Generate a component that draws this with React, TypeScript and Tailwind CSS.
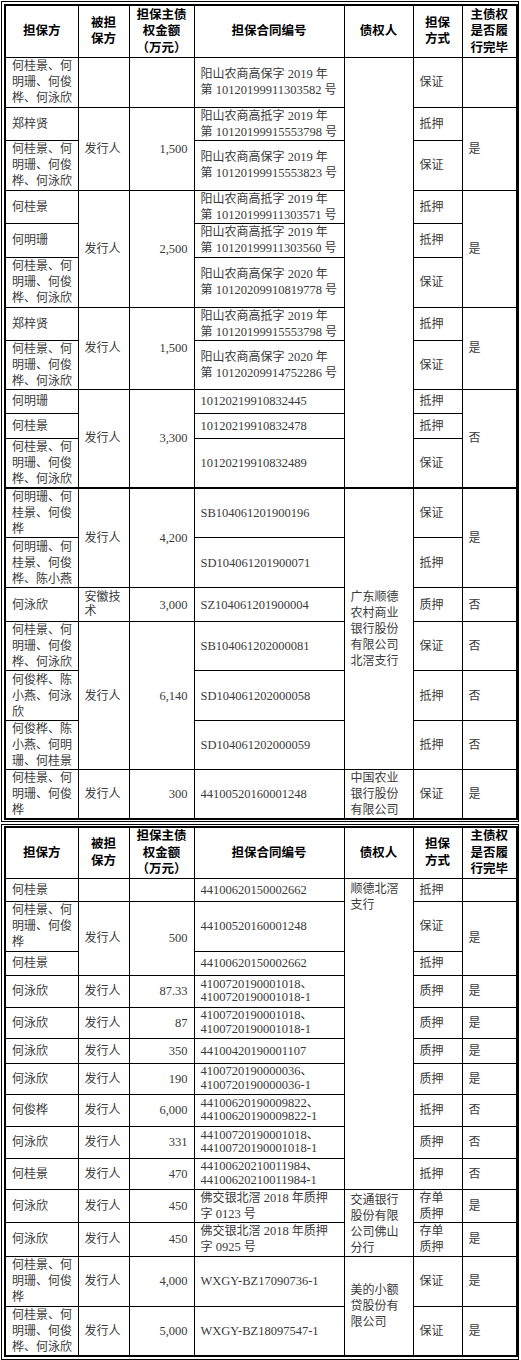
import clsx from 'clsx';

const CJK = /([\u3000-\u303f\u4e00-\u9fff\uff00-\uffef]+)/;

// CJK runs and Latin runs use slightly different sizes, as in the scanned PDF
function Txt({ s }: { s: string }) {
  const parts = s.split(CJK).filter(Boolean);
  return (
    <>
      {parts.map((p, i) =>
        CJK.test(p) ? (
          <span key={i} className="text-[12px] leading-none">
            {p}
          </span>
        ) : (
          <span key={i} className="text-[12.5px] leading-none">
            {p}
          </span>
        )
      )}
    </>
  );
}

type CellProps = {
  t?: string | string[];
  rs?: number;
  right?: boolean;
  top?: boolean;
  thick?: boolean;
  tight?: boolean;
};

function Td({ t, rs, right, top, thick, tight }: CellProps) {
  const lines = t === undefined ? [] : Array.isArray(t) ? t : [t];
  return (
    <td
      rowSpan={rs}
      className={clsx(
        'border border-black px-[6px] py-0 text-[12px] whitespace-nowrap text-[#3a3a3a]',
        right ? 'text-right' : 'text-left',
        top ? 'align-top pt-[2px]' : 'align-middle',
        thick && 'border-t-2'
      )}
    >
      {lines.map((l, i) => (
        <div key={i} className={tight ? 'h-[13.5px] leading-[13.5px]' : 'h-[16px] leading-[16px]'}>
          <Txt s={l} />
        </div>
      ))}
    </td>
  );
}

function Head({ short }: { short?: boolean }) {
  const h = 'border border-black font-bold text-black text-center align-middle leading-[16.5px] text-[12.5px] px-0';
  return (
    <tr className={short ? 'h-[50px]' : 'h-[52px]'}>
      <th className={h}>担保方</th>
      <th className={h}>
        被担
        <br />
        保方
      </th>
      <th className={h}>
        担保主债
        <br />
        权金额
        <br />
        （万元）
      </th>
      <th className={h}>担保合同编号</th>
      <th className={h}>债权人</th>
      <th className={h}>
        担保
        <br />
        方式
      </th>
      <th className={h}>
        主债权
        <br />
        是否履
        <br />
        行完毕
      </th>
    </tr>
  );
}

function Cols() {
  return (
    <colgroup>
      <col className="w-[73px]" />
      <col className="w-[51px]" />
      <col className="w-[65px]" />
      <col className="w-[150px]" />
      <col className="w-[69px]" />
      <col className="w-[49px]" />
      <col className="w-[55px]" />
    </colgroup>
  );
}

const four = ['何桂景、何', '明珊、何俊', '桦、何泳欣'];
const three = ['何桂景、何', '明珊、何俊', '桦'];

function TableOne() {
  return (
    <div className="w-[518px] border border-black px-[2px] pt-[2px] pb-[1px]">
      <table className="w-full table-fixed border-collapse border-2 border-black">
        <Cols />
        <tbody>
          <Head />
          <tr className="h-[50px]">
            <Td t={four} />
            <Td />
            <Td />
            <Td t={['阳山农商高保字 2019 年', '第 10120199911303582 号']} />
            <Td rs={11} />
            <Td t="保证" />
            <Td />
          </tr>
          <tr className="h-[33px]">
            <Td t="郑梓贤" />
            <Td t="发行人" rs={2} />
            <Td t="1,500" rs={2} right />
            <Td t={['阳山农商高抵字 2019 年', '第 10120199915553798 号']} />
            <Td t="抵押" />
            <Td t="是" rs={2} />
          </tr>
          <tr className="h-[50px]">
            <Td t={four} />
            <Td t={['阳山农商高保字 2019 年', '第 10120199915553823 号']} />
            <Td t="保证" />
          </tr>
          <tr className="h-[33px]">
            <Td t="何桂景" />
            <Td t="发行人" rs={3} />
            <Td t="2,500" rs={3} right />
            <Td t={['阳山农商高抵字 2019 年', '第 10120199911303571 号']} />
            <Td t="抵押" />
            <Td t="是" rs={3} />
          </tr>
          <tr className="h-[34px]">
            <Td t="何明珊" />
            <Td t={['阳山农商高抵字 2019 年', '第 10120199911303560 号']} />
            <Td t="抵押" />
          </tr>
          <tr className="h-[50px]">
            <Td t={four} />
            <Td t={['阳山农商高保字 2020 年', '第 10120209910819778 号']} />
            <Td t="保证" />
          </tr>
          <tr className="h-[33px]">
            <Td t="郑梓贤" />
            <Td t="发行人" rs={2} />
            <Td t="1,500" rs={2} right />
            <Td t={['阳山农商高抵字 2019 年', '第 10120199915553798 号']} />
            <Td t="抵押" />
            <Td t="是" rs={2} />
          </tr>
          <tr className="h-[49px]">
            <Td t={four} />
            <Td t={['阳山农商高保字 2020 年', '第 10120209914752286 号']} />
            <Td t="保证" />
          </tr>
          <tr className="h-[24px]">
            <Td t="何明珊" />
            <Td t="发行人" rs={3} />
            <Td t="3,300" rs={3} right />
            <Td t="10120219910832445" />
            <Td t="抵押" />
            <Td t="否" rs={3} />
          </tr>
          <tr className="h-[25px]">
            <Td t="何桂景" />
            <Td t="10120219910832478" />
            <Td t="抵押" />
          </tr>
          <tr className="h-[49px]">
            <Td t={four} />
            <Td t="10120219910832489" />
            <Td t="保证" />
          </tr>
          <tr className="h-[50px]">
            <Td t={['何明珊、何', '桂景、何俊', '桦']} thick />
            <Td t="发行人" rs={2} thick />
            <Td t="4,200" rs={2} right thick />
            <Td t="SB104061201900196" thick />
            <Td t={['广东顺德', '农村商业', '银行股份', '有限公司', '北滘支行']} rs={6} thick />
            <Td t="保证" thick />
            <Td t="是" rs={2} thick />
          </tr>
          <tr className="h-[50px]">
            <Td t={['何明珊、何', '桂景、何俊', '桦、陈小燕']} />
            <Td t="SD104061201900071" />
            <Td t="抵押" />
          </tr>
          <tr className="h-[34px]">
            <Td t="何泳欣" />
            <Td t={['安徽技', '术']} tight />
            <Td t="3,000" right />
            <Td t="SZ104061201900004" />
            <Td t="质押" />
            <Td t="否" />
          </tr>
          <tr className="h-[49px]">
            <Td t={four} />
            <Td t="发行人" rs={3} />
            <Td t="6,140" rs={3} right />
            <Td t="SB104061202000081" />
            <Td t="保证" />
            <Td t="否" />
          </tr>
          <tr className="h-[50px]">
            <Td t={['何俊桦、陈', '小燕、何泳', '欣']} />
            <Td t="SD104061202000058" />
            <Td t="抵押" />
            <Td t="否" />
          </tr>
          <tr className="h-[49px]">
            <Td t={['何俊桦、陈', '小燕、何明', '珊、何桂景']} />
            <Td t="SD104061202000059" />
            <Td t="抵押" />
            <Td t="否" />
          </tr>
          <tr className="h-[48px]">
            <Td t={three} />
            <Td t="发行人" />
            <Td t="300" right />
            <Td t="44100520160001248" />
            <Td t={['中国农业', '银行股份', '有限公司']} />
            <Td t="保证" />
            <Td t="是" />
          </tr>
        </tbody>
      </table>
    </div>
  );
}

function TableTwo() {
  return (
    <div className="mt-[2px] w-[518px] border border-black px-[2px] pt-[1px] pb-[2px]">
      <table className="w-full table-fixed border-collapse border-2 border-black">
        <Cols />
        <tbody>
          <Head short />
          <tr className="h-[23px]">
            <Td t="何桂景" />
            <Td />
            <Td />
            <Td t="44100620150002662" />
            <Td t={['顺德北滘', '支行']} rs={10} top />
            <Td t="抵押" />
            <Td />
          </tr>
          <tr className="h-[50px]">
            <Td t={three} />
            <Td t="发行人" rs={2} />
            <Td t="500" rs={2} right />
            <Td t="44100520160001248" />
            <Td t="保证" />
            <Td t="是" rs={2} />
          </tr>
          <tr className="h-[24px]">
            <Td t="何桂景" />
            <Td t="44100620150002662" />
            <Td t="抵押" />
          </tr>
          <tr className="h-[32px]">
            <Td t="何泳欣" />
            <Td t="发行人" />
            <Td t="87.33" right />
            <Td t={['4100720190001018、', '4100720190001018-1']} tight />
            <Td t="质押" />
            <Td t="是" />
          </tr>
          <tr className="h-[31px]">
            <Td t="何泳欣" />
            <Td t="发行人" />
            <Td t="87" right />
            <Td t={['4100720190001018、', '4100720190001018-1']} tight />
            <Td t="质押" />
            <Td t="是" />
          </tr>
          <tr className="h-[25px]">
            <Td t="何泳欣" />
            <Td t="发行人" />
            <Td t="350" right />
            <Td t="44100420190001107" />
            <Td t="质押" />
            <Td t="是" />
          </tr>
          <tr className="h-[31px]">
            <Td t="何泳欣" />
            <Td t="发行人" />
            <Td t="190" right />
            <Td t={['4100720190000036、', '4100720190000036-1']} tight />
            <Td t="质押" />
            <Td t="是" />
          </tr>
          <tr className="h-[32px]">
            <Td t="何俊桦" />
            <Td t="发行人" />
            <Td t="6,000" right />
            <Td t={['44100620190009822、', '44100620190009822-1']} tight />
            <Td t="抵押" />
            <Td t="否" />
          </tr>
          <tr className="h-[32px]">
            <Td t="何泳欣" />
            <Td t="发行人" />
            <Td t="331" right />
            <Td t={['44100720190001018、', '44100720190001018-1']} tight />
            <Td t="质押" />
            <Td t="否" />
          </tr>
          <tr className="h-[31px]">
            <Td t="何桂景" />
            <Td t="发行人" />
            <Td t="470" right />
            <Td t={['44100620210011984、', '44100620210011984-1']} tight />
            <Td t="抵押" />
            <Td t="否" />
          </tr>
          <tr className="h-[33px]">
            <Td t="何泳欣" />
            <Td t="发行人" />
            <Td t="450" right />
            <Td t={['佛交银北滘 2018 年质押', '字 0123 号']} />
            <Td t={['交通银行', '股份有限', '公司佛山', '分行']} rs={2} top />
            <Td t={['存单', '质押']} />
            <Td t="是" />
          </tr>
          <tr className="h-[33px]">
            <Td t="何泳欣" />
            <Td t="发行人" />
            <Td t="450" right />
            <Td t={['佛交银北滘 2018 年质押', '字 0925 号']} />
            <Td t={['存单', '质押']} />
            <Td t="是" />
          </tr>
          <tr className="h-[50px]">
            <Td t={three} />
            <Td t="发行人" />
            <Td t="4,000" right />
            <Td t="WXGY-BZ17090736-1" />
            <Td t={['美的小额', '贷股份有', '限公司']} rs={2} />
            <Td t="保证" />
            <Td t="是" />
          </tr>
          <tr className="h-[48px]">
            <Td t={four} />
            <Td t="发行人" />
            <Td t="5,000" right />
            <Td t="WXGY-BZ18097547-1" />
            <Td t="保证" />
            <Td t="是" />
          </tr>
        </tbody>
      </table>
    </div>
  );
}

export default function App() {
  return (
    <div className="w-[521px] bg-white pt-[1px] pl-[1px] font-['Liberation_Serif','Noto_Sans_CJK_SC',serif]">
      <TableOne />
      <TableTwo />
    </div>
  );
}
